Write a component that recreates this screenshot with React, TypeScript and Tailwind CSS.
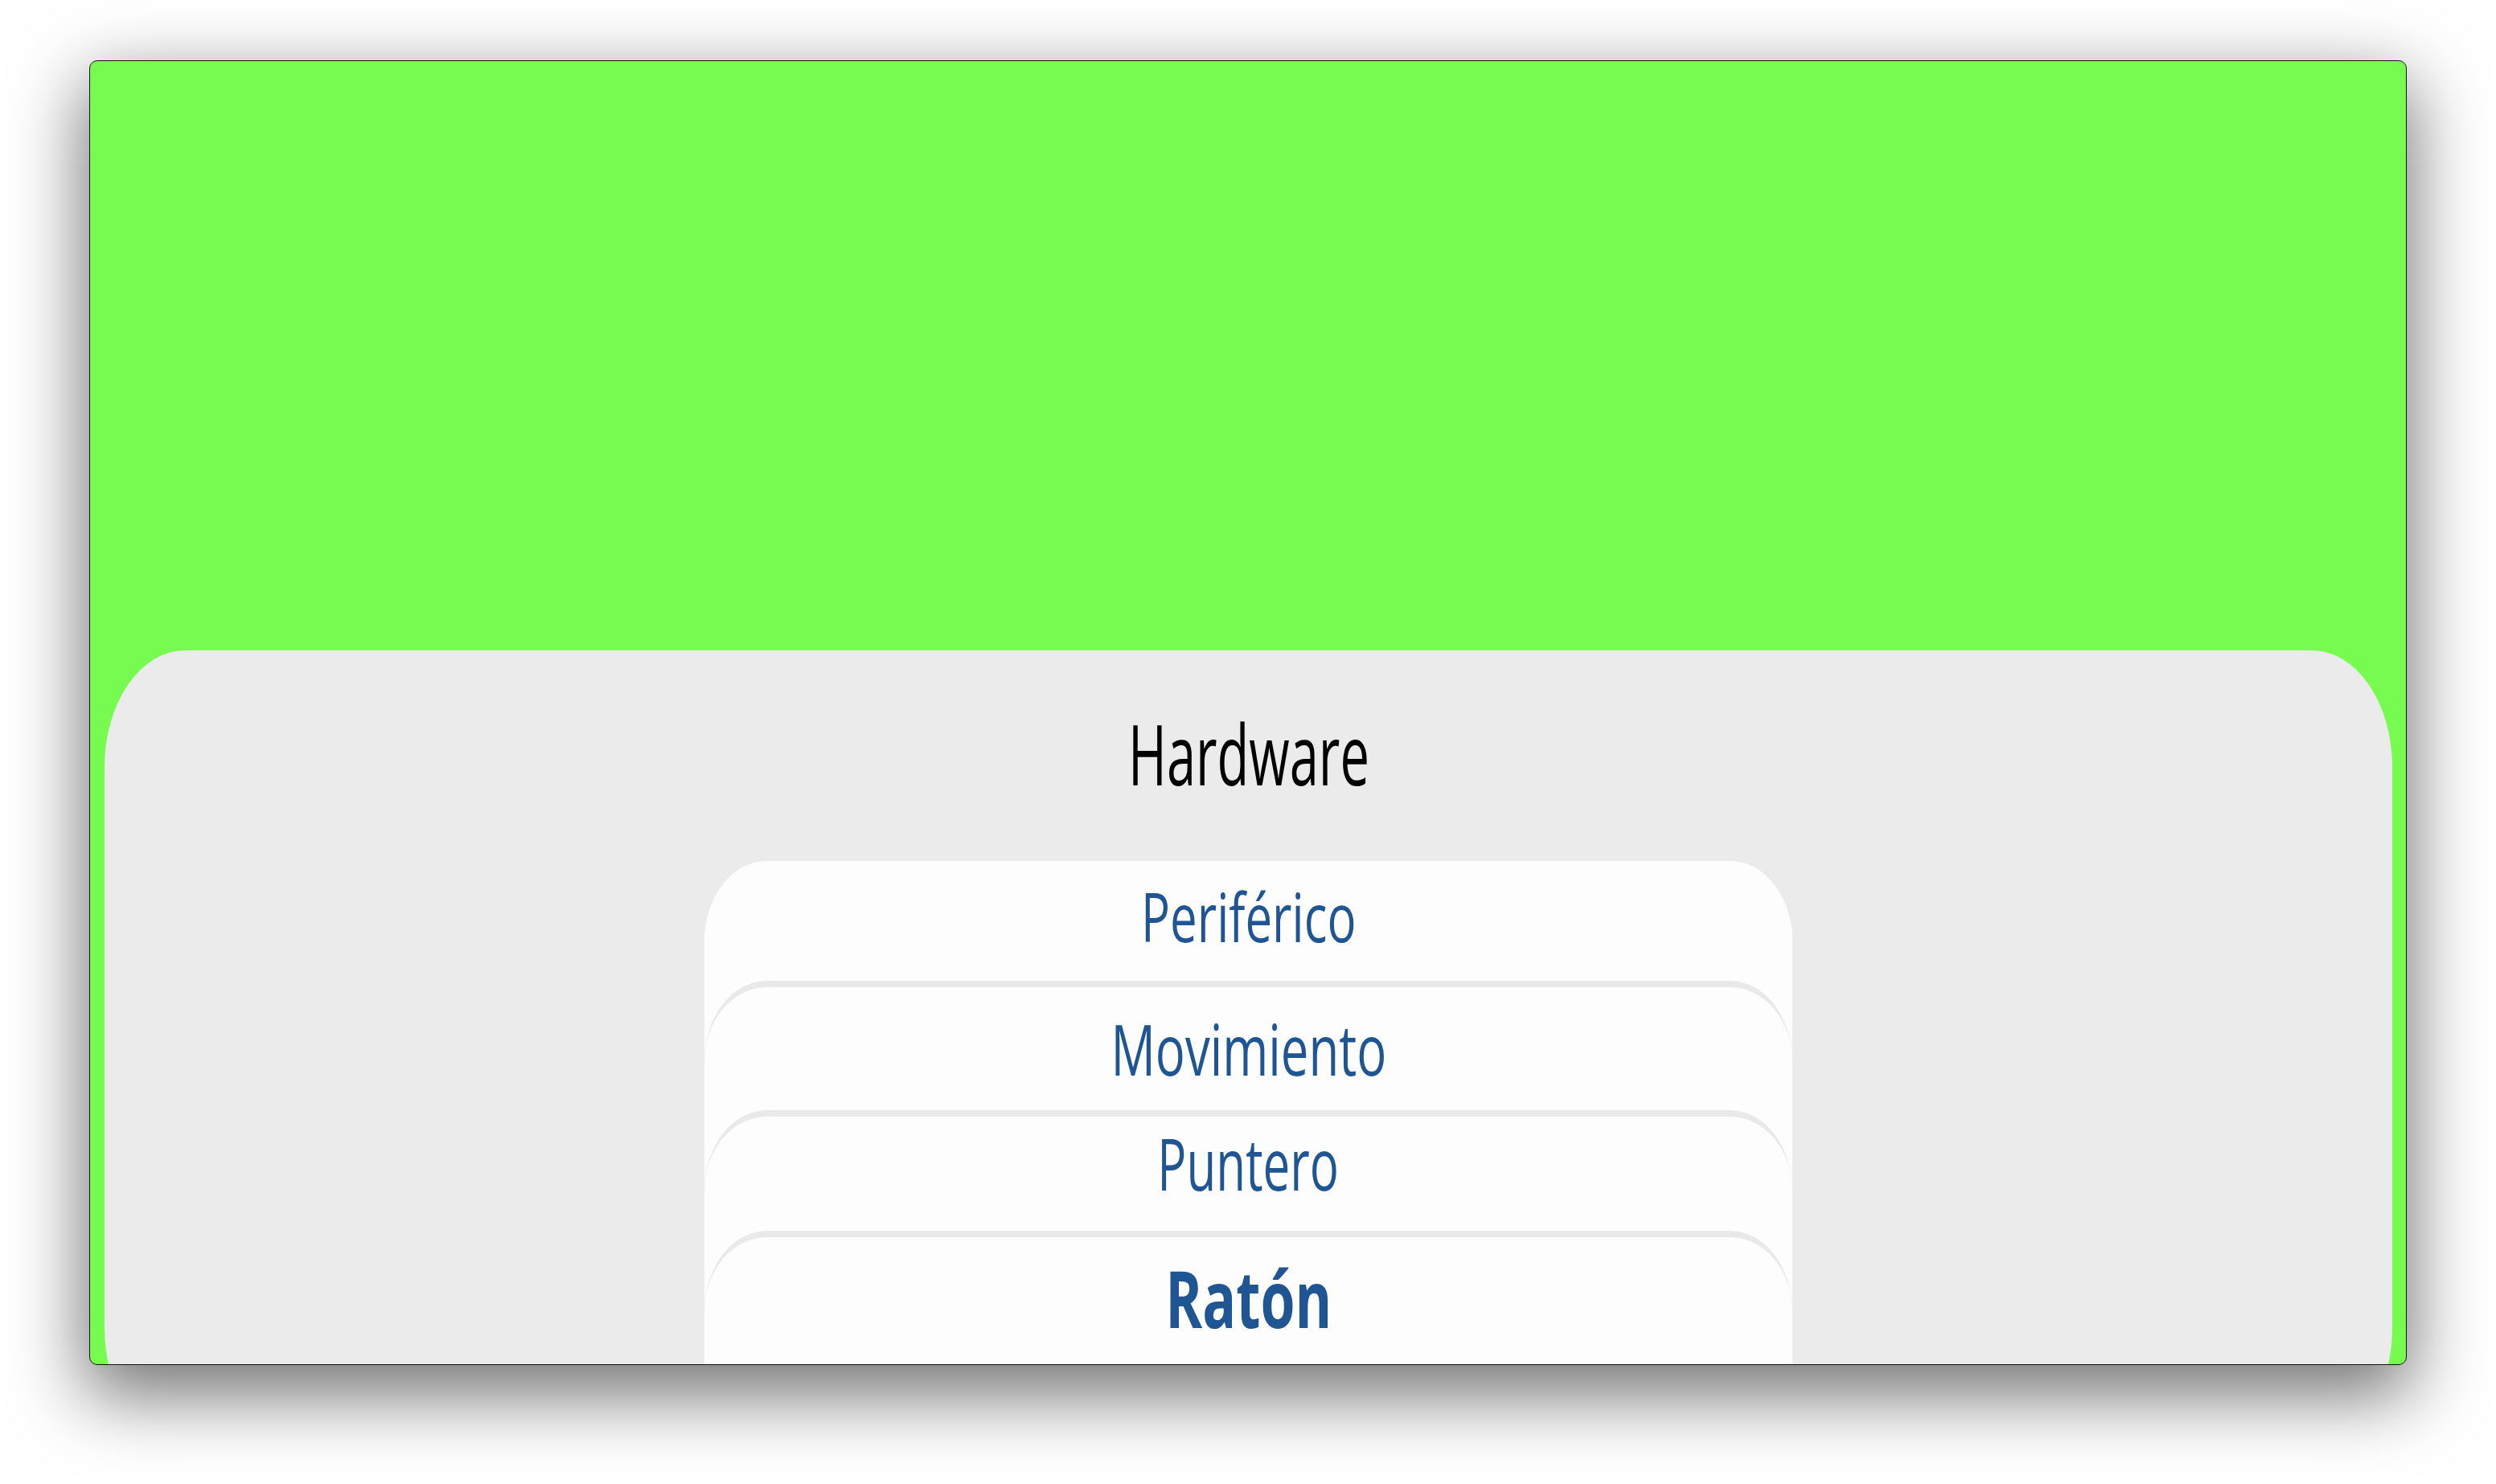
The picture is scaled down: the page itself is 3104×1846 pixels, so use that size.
const items = [
  { label: "Periférico", card: "h-[149px] pt-[26px]", text: "text-[85px] font-medium scale-x-[0.705]" },
  { label: "Movimiento", card: "h-[161px] pt-[32px] border-t-[8px]", text: "text-[88px] font-medium scale-x-[0.70]" },
  { label: "Puntero", card: "h-[150px] pt-[13px] border-t-[8px]", text: "text-[89px] font-medium scale-x-[0.675]" },
  { label: "Ratón", card: "h-[220px] pt-[26px] border-t-[8px]", text: "text-[98px] font-bold scale-x-[0.71]" },
];

export default function App() {
  return (
    <div className="h-screen w-full overflow-hidden bg-white px-[111px] pt-[75px] font-['Open_Sans',sans-serif]">
      <div className="flex h-[1623px] flex-col overflow-hidden rounded-[10px] border border-[#111] bg-[#77fb50] shadow-[0_32px_90px_6px_rgba(0,0,0,0.55)]">
        <div className="h-[733px] flex-none" />
        <section className="mx-[18px] mr-[17px] h-[988px] flex-none rounded-[100px_/_145px] bg-[#ebebeb] pt-[76px]">
          <h1 className="text-center text-[104px] font-normal leading-none text-black">
            <span className="inline-block scale-x-[0.625]">Hardware</span>
          </h1>
          <div className="mx-auto mt-[82px] w-[1353px] rounded-t-[78px_100px] bg-[#fdfdfd]">
            {items.map((it) => (
              <div
                key={it.label}
                className={`${it.card} rounded-t-[78px_100px] border-[#e9e9e9] bg-[#fdfdfd] text-center`}
              >
                <span className={`${it.text} inline-block leading-none text-[#1f5592]`}>{it.label}</span>
              </div>
            ))}
          </div>
        </section>
      </div>
    </div>
  );
}
